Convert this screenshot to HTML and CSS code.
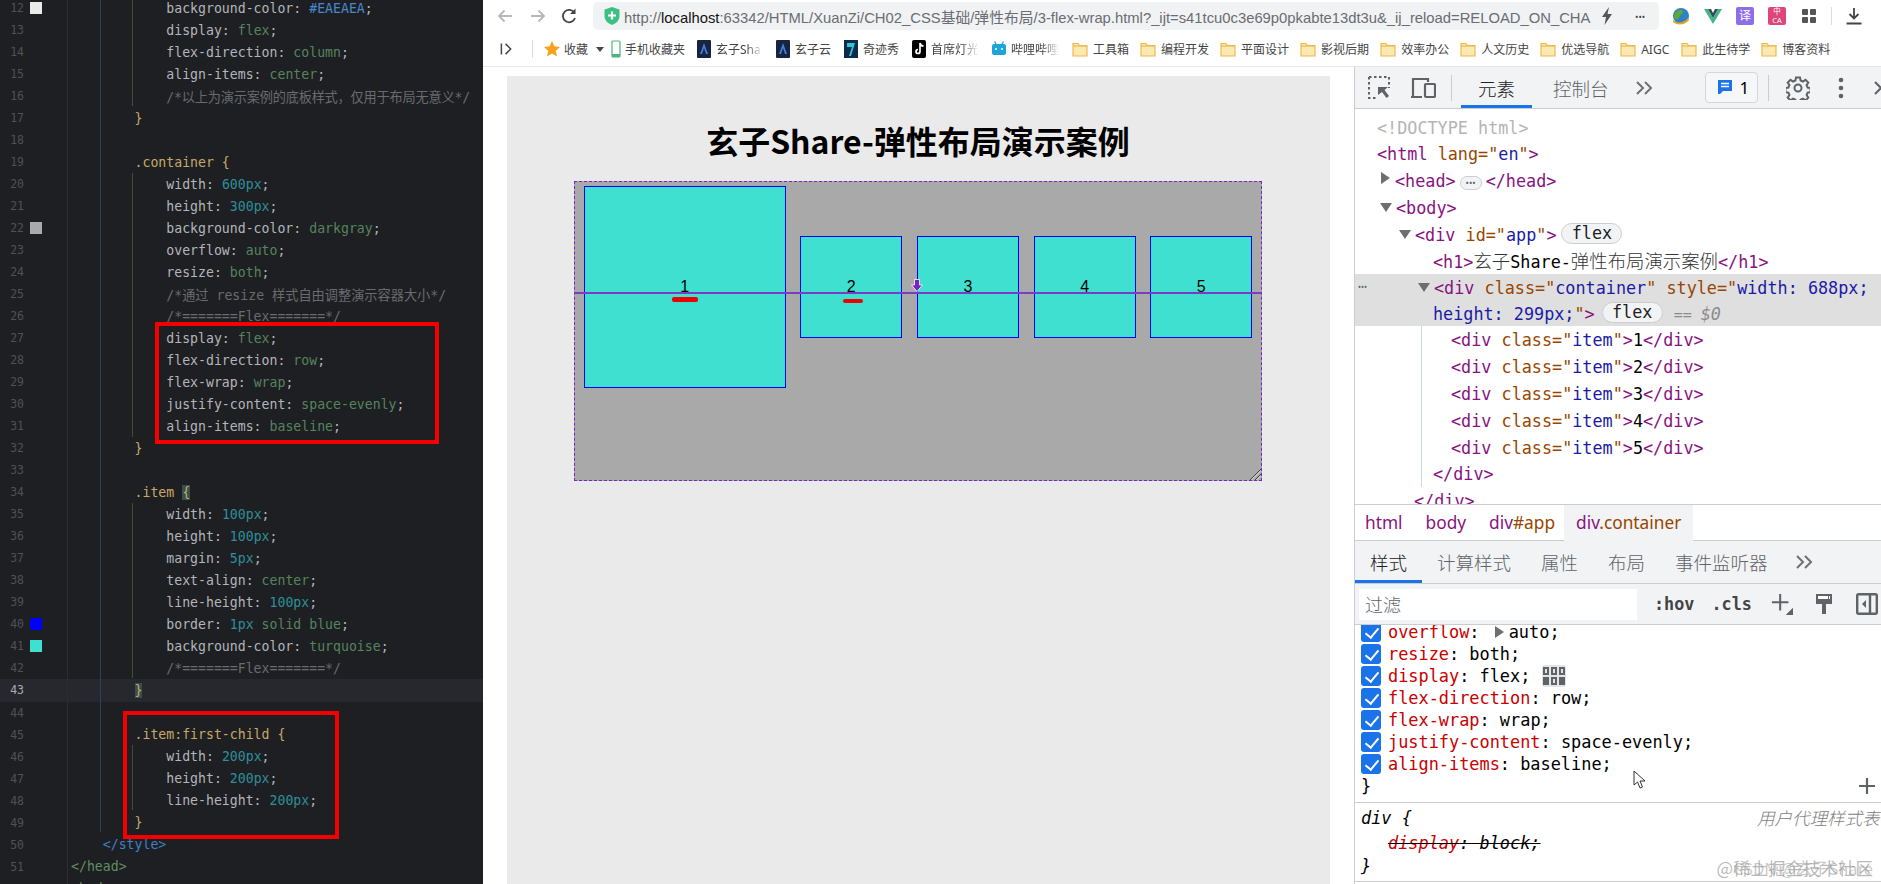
FILE: index.html
```html
<!DOCTYPE html>
<html lang="en">
<head>
    <meta charset="UTF-8">
    <title>3-flex-wrap</title>
    <link rel="stylesheet" href="styles.css">
</head>
<body>
    <svg class="defs" width="0" height="0">
        <symbol id="folder" viewBox="0 0 16 16">
            <path d="M1 2.5h5l1.5 2H15v10.5H1z" fill="#fde9b0" stroke="#efb84f" stroke-width="1.2"/>
            <path d="M1 5h14" stroke="#efb84f" stroke-width="1.2"/>
        </symbol>
        <symbol id="chevrons" viewBox="0 0 20 16">
            <path d="M2 2l6 6-6 6M10 2l6 6-6 6" fill="none" stroke="#6e7176" stroke-width="2"/>
        </symbol>
        <symbol id="xlogo" viewBox="0 0 14 18">
            <rect width="14" height="18" rx="1" fill="#17233f"/>
            <path d="M7 3L3 14h2l2-6 2 6h2z" fill="#3f7fe0"/>
        </symbol>
    </svg>

    <!-- left: code editor -->
    <section class="editor">
        <i class="guide guide-a"></i>
        <i class="guide guide-b"></i>
        <i class="guide guide-c g1"></i>
        <i class="guide guide-c g2"></i>
        <i class="guide guide-c g3"></i>
        <i class="guide guide-c g4"></i>
        <i class="redbox box-one"></i>
        <i class="redbox box-two"></i>

        <div class="lines">
            <div class="line"><span class="ln">12</span><span class="swatch sw-light"></span><code>            <b>background-color:</b> <span class="hex">#EAEAEA</span><b>;</b></code></div>
            <div class="line"><span class="ln">13</span><span class="swatch"></span><code>            <b>display:</b> <span class="val">flex</span><b>;</b></code></div>
            <div class="line"><span class="ln">14</span><span class="swatch"></span><code>            <b>flex-direction:</b> <span class="val">column</span><b>;</b></code></div>
            <div class="line"><span class="ln">15</span><span class="swatch"></span><code>            <b>align-items:</b> <span class="val">center</span><b>;</b></code></div>
            <div class="line"><span class="ln">16</span><span class="swatch"></span><code>            <span class="cm cm-tight">/*以上为演示案例的底板样式，仅用于布局无意义*/</span></code></div>
            <div class="line"><span class="ln">17</span><span class="swatch"></span><code>        <span class="sel">}</span></code></div>
            <div class="line"><span class="ln">18</span><span class="swatch"></span><code></code></div>
            <div class="line"><span class="ln">19</span><span class="swatch"></span><code>        <span class="sel">.container {</span></code></div>
            <div class="line"><span class="ln">20</span><span class="swatch"></span><code>            <b>width:</b> <span class="num">600px</span><b>;</b></code></div>
            <div class="line"><span class="ln">21</span><span class="swatch"></span><code>            <b>height:</b> <span class="num">300px</span><b>;</b></code></div>
            <div class="line"><span class="ln">22</span><span class="swatch sw-gray"></span><code>            <b>background-color:</b> <span class="val">darkgray</span><b>;</b></code></div>
            <div class="line"><span class="ln">23</span><span class="swatch"></span><code>            <b>overflow:</b> <span class="val">auto</span><b>;</b></code></div>
            <div class="line"><span class="ln">24</span><span class="swatch"></span><code>            <b>resize:</b> <span class="val">both</span><b>;</b></code></div>
            <div class="line"><span class="ln">25</span><span class="swatch"></span><code>            <span class="cm">/*通过 resize 样式自由调整演示容器大小*/</span></code></div>
            <div class="line"><span class="ln">26</span><span class="swatch"></span><code>            <span class="cm">/*=======Flex=======*/</span></code></div>
            <div class="line"><span class="ln">27</span><span class="swatch"></span><code>            <b>display:</b> <span class="val">flex</span><b>;</b></code></div>
            <div class="line"><span class="ln">28</span><span class="swatch"></span><code>            <b>flex-direction:</b> <span class="val">row</span><b>;</b></code></div>
            <div class="line"><span class="ln">29</span><span class="swatch"></span><code>            <b>flex-wrap:</b> <span class="val">wrap</span><b>;</b></code></div>
            <div class="line"><span class="ln">30</span><span class="swatch"></span><code>            <b>justify-content:</b> <span class="val">space-evenly</span><b>;</b></code></div>
            <div class="line"><span class="ln">31</span><span class="swatch"></span><code>            <b>align-items:</b> <span class="val">baseline</span><b>;</b></code></div>
            <div class="line"><span class="ln">32</span><span class="swatch"></span><code>        <span class="sel">}</span></code></div>
            <div class="line"><span class="ln">33</span><span class="swatch"></span><code></code></div>
            <div class="line"><span class="ln">34</span><span class="swatch"></span><code>        <span class="sel">.item <span class="match">{</span></span></code></div>
            <div class="line"><span class="ln">35</span><span class="swatch"></span><code>            <b>width:</b> <span class="num">100px</span><b>;</b></code></div>
            <div class="line"><span class="ln">36</span><span class="swatch"></span><code>            <b>height:</b> <span class="num">100px</span><b>;</b></code></div>
            <div class="line"><span class="ln">37</span><span class="swatch"></span><code>            <b>margin:</b> <span class="num">5px</span><b>;</b></code></div>
            <div class="line"><span class="ln">38</span><span class="swatch"></span><code>            <b>text-align:</b> <span class="val">center</span><b>;</b></code></div>
            <div class="line"><span class="ln">39</span><span class="swatch"></span><code>            <b>line-height:</b> <span class="num">100px</span><b>;</b></code></div>
            <div class="line"><span class="ln">40</span><span class="swatch sw-blue"></span><code>            <b>border:</b> <span class="num">1px</span> <span class="val">solid blue</span><b>;</b></code></div>
            <div class="line"><span class="ln">41</span><span class="swatch sw-turq"></span><code>            <b>background-color:</b> <span class="val">turquoise</span><b>;</b></code></div>
            <div class="line"><span class="ln">42</span><span class="swatch"></span><code>            <span class="cm">/*=======Flex=======*/</span></code></div>
            <div class="line current"><span class="ln">43</span><span class="swatch"></span><code>        <span class="sel"><span class="match">}</span></span></code></div>
            <div class="line"><span class="ln">44</span><span class="swatch"></span><code></code></div>
            <div class="line"><span class="ln">45</span><span class="swatch"></span><code>        <span class="sel">.item:first-child {</span></code></div>
            <div class="line"><span class="ln">46</span><span class="swatch"></span><code>            <b>width:</b> <span class="num">200px</span><b>;</b></code></div>
            <div class="line"><span class="ln">47</span><span class="swatch"></span><code>            <b>height:</b> <span class="num">200px</span><b>;</b></code></div>
            <div class="line"><span class="ln">48</span><span class="swatch"></span><code>            <b>line-height:</b> <span class="num">200px</span><b>;</b></code></div>
            <div class="line"><span class="ln">49</span><span class="swatch"></span><code>        <span class="sel">}</span></code></div>
            <div class="line"><span class="ln">50</span><span class="swatch"></span><code>    <span class="tag-blue">&lt;/style&gt;</span></code></div>
            <div class="line"><span class="ln">51</span><span class="swatch"></span><code><span class="tag-green">&lt;/head&gt;</span></code></div>
            <div class="line"><span class="ln">52</span><span class="swatch"></span><code><span class="tag-green">&lt;body&gt;</span></code></div>
        </div>
    </section>

    <!-- right: browser window -->
    <section class="browser">
        <div class="toolbar">
            <svg class="nav" viewBox="0 0 18 18"><path d="M16 9H3M8.500 3.500L3 9l5.500 5.500" fill="none" stroke="#b4b7bb" stroke-width="1.800"/></svg>
            <svg class="nav" viewBox="0 0 18 18"><path d="M2 9h13M9.500 3.500L15 9l-5.500 5.500" fill="none" stroke="#b4b7bb" stroke-width="1.800"/></svg>
            <svg class="nav reload" viewBox="0 0 18 18"><path d="M14.500 6A6.200 6.200 0 1 0 15 11" fill="none" stroke="#444" stroke-width="1.800"/><path d="M15.500 1.500V7H10z" fill="#444"/></svg>
            <div class="urlbar">
                <svg class="shield" viewBox="0 0 16 18"><path d="M8 0l7.500 2.500V9c0 4.500-3.500 7.500-7.500 9-4-1.500-7.500-4.500-7.500-9V2.500z" fill="#3cc183"/><path d="M8 4.500v8M4 8.500h8" stroke="#fff" stroke-width="2.200"/></svg>
                <span class="url">http://<em>localhost</em>:63342/HTML/XuanZi/CH02_CSS基础/弹性布局/3-flex-wrap.html?_ijt=s41tcu0c3e69p0pkabte13dt3u&amp;_ij_reload=RELOAD_ON_CHA</span>
                <svg class="bolt" viewBox="0 0 12 18"><path d="M8 0L1 10h4l-1.500 8L11 7H6.500z" fill="#555"/></svg>
                <span class="dots">•••</span>
            </div>
            <div class="exts">
                <svg class="ext" viewBox="0 0 18 18"><circle cx="9" cy="9" r="8" fill="#2f7fc9"/><path d="M3 6c3-4 7-4 8-2s-2 3-3 5-3 5-5 3-1-4 0-6z" fill="#5ea83c"/><path d="M1 13c4 4 11 3 15-2l1 2c-4 5-12 6-16 2z" fill="#e5a41f"/></svg>
                <svg class="ext" viewBox="0 0 18 18"><path d="M0 2h4l5 9 5-9h4L9 17z" fill="#41b883"/><path d="M4 2h3l2 4 2-4h3L9 11z" fill="#35495e"/></svg>
                <span class="ext tile tile-purple">译</span>
                <span class="ext tile tile-red">中<br>CA</span>
                <svg class="ext" viewBox="0 0 18 18"><rect x="2" y="2" width="6" height="6" rx="1" fill="#555"/><rect x="10" y="2" width="6" height="6" rx="1" fill="#555"/><rect x="2" y="10" width="6" height="6" rx="1" fill="#555"/><rect x="10" y="10" width="6" height="6" rx="1" fill="#555"/></svg>
                <i class="ext-sep"></i>
                <svg class="ext ext-down" viewBox="0 0 18 18"><path d="M9 1v10M4.500 7L9 11.500 13.500 7M1.500 16.500h15" fill="none" stroke="#444" stroke-width="1.800"/></svg>
                <span class="ext-more">⋮</span>
            </div>
        </div>

        <div class="bookmarks">
            <svg class="bm-toggle" viewBox="0 0 14 14"><path d="M1.500 1v12M6 1.500L11.500 7 6 12.500" fill="none" stroke="#444" stroke-width="1.600"/></svg>
            <i class="bm-sep"></i>
            <div class="mark mark-fav">
                <svg class="fav-star" viewBox="0 0 16 16"><path d="M8 0l2.400 5.300 5.600.6-4.200 3.800 1.200 5.800L8 12.600l-5 2.900 1.200-5.800L0 5.900l5.600-.6z" fill="#f7a21b"/></svg>
                <span>收藏</span><i class="caret"></i>
            </div>
            <div class="mark mark-phone">
                <svg class="fav-phone" viewBox="0 0 10 18"><rect x="1" y="1" width="8" height="16" rx="1" fill="none" stroke="#4fb37f" stroke-width="1.200"/><path d="M1 14h8v3H1z" fill="#4fb37f"/></svg>
                <span>手机收藏夹</span>
            </div>
            <div class="mark mark-site">
                <svg class="fav"><use href="#xlogo"/></svg>
                <span class="fade">玄子Sha</span>
            </div>
            <div class="mark mark-site">
                <svg class="fav"><use href="#xlogo"/></svg>
                <span>玄子云</span>
            </div>
            <div class="mark mark-site">
                <svg class="fav" viewBox="0 0 14 18"><rect width="14" height="18" fill="#0c2a4a"/><path d="M3 3h8L7 16H5l3-9H3z" fill="#2fc4d8"/></svg>
                <span>奇迹秀</span>
            </div>
            <div class="mark mark-site">
                <svg class="fav" viewBox="0 0 14 18"><rect width="14" height="18" rx="2" fill="#000"/><path d="M8 3v8.500a2 2 0 1 1-2-2M8 3c.3 2 1.500 3 3.500 3.200" fill="none" stroke="#fff" stroke-width="1.700"/></svg>
                <span class="fade fade-wide">首席灯光</span>
            </div>
            <div class="mark mark-site">
                <svg class="fav" viewBox="0 0 14 18"><rect y="4" width="14" height="11" rx="2" fill="#1ea5d8"/><path d="M4 4L2.500 1.500M10 4l1.500-2.500" stroke="#1ea5d8" stroke-width="1.400"/><path d="M4 8v2M10 8v2" stroke="#fff" stroke-width="1.500"/></svg>
                <span class="fade fade-wide">哔哩哔哩</span>
            </div>
            <div class="mark"><svg class="folder"><use href="#folder"/></svg><span>工具箱</span></div>
            <div class="mark"><svg class="folder"><use href="#folder"/></svg><span>编程开发</span></div>
            <div class="mark"><svg class="folder"><use href="#folder"/></svg><span>平面设计</span></div>
            <div class="mark"><svg class="folder"><use href="#folder"/></svg><span>影视后期</span></div>
            <div class="mark"><svg class="folder"><use href="#folder"/></svg><span>效率办公</span></div>
            <div class="mark"><svg class="folder"><use href="#folder"/></svg><span>人文历史</span></div>
            <div class="mark"><svg class="folder"><use href="#folder"/></svg><span>优选导航</span></div>
            <div class="mark"><svg class="folder"><use href="#folder"/></svg><span class="latin">AIGC</span></div>
            <div class="mark"><svg class="folder"><use href="#folder"/></svg><span>此生待学</span></div>
            <div class="mark"><svg class="folder"><use href="#folder"/></svg><span>博客资料</span></div>
        </div>

        <div class="split">
            <div class="page">
                <div id="app">
                    <h1>玄子Share-弹性布局演示案例</h1>
                    <div class="container">
                        <div class="item">1</div>
                        <div class="item">2</div>
                        <div class="item">3</div>
                        <div class="item">4</div>
                        <div class="item">5</div>
                        <i class="baseline"></i>
                        <i class="redmark mark-one"></i>
                        <i class="redmark mark-two"></i>
                        <svg class="flow-arrow" viewBox="0 0 12 13"><path d="M3.500 .5h5v5.500h3L6 12.500 .5 6h3z" fill="#7a22c8" stroke="#fff" stroke-width=".8"/></svg>
                        <svg class="grip" viewBox="0 0 12 12"><path d="M1 12L12 1M6 12l6-6" stroke="#444" stroke-width="1"/><path d="M2.500 12L12 2.500M7.500 12L12 7.500" stroke="#ddd" stroke-width="1"/></svg>
                    </div>
                </div>
            </div>

            <div class="devtools">
                <div class="dt-tabs">
                    <svg class="dt-inspect" viewBox="0 0 22 24"><path d="M1 1h20v11M1 1v21h8" fill="none" stroke="#5f6368" stroke-width="2" stroke-dasharray="2.500 2.500"/><path d="M10 11h10l-3.500 3 4.500 6-2.500 2-4.500-6-4 3z" fill="#5f6368"/></svg>
                    <svg class="dt-device" viewBox="0 0 26 22"><path d="M3 20V2h15v3M1 20h11" fill="none" stroke="#5f6368" stroke-width="2.200"/><rect x="15" y="7" width="10" height="13" rx="1" fill="none" stroke="#5f6368" stroke-width="2.200"/></svg>
                    <i class="dt-sep"></i>
                    <span class="dt-tab active">元素</span>
                    <span class="dt-tab console-tab">控制台</span>
                    <svg class="chev"><use href="#chevrons"/></svg>
                    <span class="issues"><svg viewBox="0 0 14 15"><path d="M0 0h14v11H5l-3 3H0z" fill="#1a73e8"/><path d="M3 3.500h8M3 6.500h8" stroke="#fff" stroke-width="1.300"/></svg>1</span>
                    <i class="dt-sep sep-gear"></i>
                    <svg class="dt-gear" viewBox="0 0 24 24"><path d="M10 1.500h4l.6 3 2.300 1 2.600-1.700 2.800 2.800-1.700 2.600 1 2.300 3 .6v4l-3 .6-1 2.300 1.700 2.600-2.800 2.800-2.600-1.700-2.300 1-.6 3h-4l-.6-3-2.300-1-2.600 1.700-2.800-2.800 1.700-2.600-1-2.300-3-.6v-4l3-.6 1-2.300-1.700-2.600 2.800-2.800 2.600 1.700 2.300-1z" fill="none" stroke="#5f6368" stroke-width="2"/><circle cx="12" cy="12" r="3.500" fill="none" stroke="#5f6368" stroke-width="2"/></svg>
                    <svg class="dt-kebab" viewBox="0 0 6 22"><circle cx="3" cy="3" r="2.300" fill="#5f6368"/><circle cx="3" cy="11" r="2.300" fill="#5f6368"/><circle cx="3" cy="19" r="2.300" fill="#5f6368"/></svg>
                    <svg class="dt-close" viewBox="0 0 14 14"><path d="M1 1l12 12M13 1L1 13" stroke="#5f6368" stroke-width="2"/></svg>
                </div>

                <div class="dom">
                    <div class="row d0 doctype">&lt;!DOCTYPE html&gt;</div>
                    <div class="row d0"><span class="tg">&lt;html</span> <span class="an">lang</span><span class="an">=</span><span class="av"><span class="an">"</span>en<span class="an">"</span></span><span class="tg">&gt;</span></div>
                    <div class="row d1"><i class="tri tri-right"></i><span class="tg">&lt;head&gt;</span><span class="more">•••</span><span class="tg">&lt;/head&gt;</span></div>
                    <div class="row d1"><i class="tri tri-down"></i><span class="tg">&lt;body&gt;</span></div>
                    <div class="row d2"><i class="tri tri-down"></i><span class="tg">&lt;div</span> <span class="an">id=</span><span class="av"><span class="an">"</span>app<span class="an">"</span></span><span class="tg">&gt;</span><span class="pill">flex</span></div>
                    <div class="row d3"><span class="tg">&lt;h1&gt;</span><span class="cjk">玄子</span>Share-<span class="cjk">弹性布局演示案例</span><span class="tg">&lt;/h1&gt;</span></div>
                    <div class="row d3 selected">
                        <span class="sel-dots">•••</span>
                        <i class="tri tri-down"></i><span class="tg">&lt;div</span> <span class="an">class=</span><span class="av"><span class="an">"</span>container<span class="an">"</span></span> <span class="an">style=</span><span class="av"><span class="an">"</span>width: 688px;<br>height: 299px;<span class="an">"</span></span><span class="tg">&gt;</span><span class="pill">flex</span><span class="eq">== <em>$0</em></span>
                    </div>
                    <div class="children">
                        <div class="row d4"><span class="tg">&lt;div</span> <span class="an">class=</span><span class="av"><span class="an">"</span>item<span class="an">"</span></span><span class="tg">&gt;</span>1<span class="tg">&lt;/div&gt;</span></div>
                        <div class="row d4"><span class="tg">&lt;div</span> <span class="an">class=</span><span class="av"><span class="an">"</span>item<span class="an">"</span></span><span class="tg">&gt;</span>2<span class="tg">&lt;/div&gt;</span></div>
                        <div class="row d4"><span class="tg">&lt;div</span> <span class="an">class=</span><span class="av"><span class="an">"</span>item<span class="an">"</span></span><span class="tg">&gt;</span>3<span class="tg">&lt;/div&gt;</span></div>
                        <div class="row d4"><span class="tg">&lt;div</span> <span class="an">class=</span><span class="av"><span class="an">"</span>item<span class="an">"</span></span><span class="tg">&gt;</span>4<span class="tg">&lt;/div&gt;</span></div>
                        <div class="row d4"><span class="tg">&lt;div</span> <span class="an">class=</span><span class="av"><span class="an">"</span>item<span class="an">"</span></span><span class="tg">&gt;</span>5<span class="tg">&lt;/div&gt;</span></div>
                        <div class="row d3"><span class="tg">&lt;/div&gt;</span></div>
                    </div>
                    <div class="row d2"><span class="tg">&lt;/div&gt;</span></div>
                </div>

                <div class="crumbs">
                    <span class="crumb"><b>html</b></span>
                    <span class="crumb"><b>body</b></span>
                    <span class="crumb"><b>div</b><u>#app</u></span>
                    <span class="crumb current-crumb"><b>div</b><u>.container</u></span>
                </div>

                <div class="dt-tabs sub-tabs">
                    <span class="sub-tab active">样式</span>
                    <span class="sub-tab">计算样式</span>
                    <span class="sub-tab">属性</span>
                    <span class="sub-tab">布局</span>
                    <span class="sub-tab">事件监听器</span>
                    <svg class="chev"><use href="#chevrons"/></svg>
                </div>

                <div class="filter">
                    <span class="filter-input">过滤</span>
                    <span class="filter-btn hov">:hov</span>
                    <span class="filter-btn">.cls</span>
                    <svg class="tool-plus" viewBox="0 0 24 24"><path d="M10 1v18M1 10h18" stroke="#5f6368" stroke-width="2.200"/><path d="M24 16v8h-8z" fill="#5f6368"/></svg>
                    <svg class="tool-paint" viewBox="0 0 20 22"><path d="M2 1h16v10H2zM8 11h4v10H8z" fill="#5f6368"/><path d="M4 3h10v3H4zM15 3h1v3h-1z" fill="#fff"/></svg>
                    <svg class="tool-side" viewBox="0 0 22 22"><rect x="1.200" y="1.200" width="19.600" height="19.600" rx="1.500" fill="none" stroke="#5f6368" stroke-width="2.400"/><path d="M14 1v20" stroke="#5f6368" stroke-width="2.400"/><path d="M10 7v8l-4-4z" fill="#5f6368"/></svg>
                </div>

                <div class="rules">
                    <div class="decls">
                        <div class="decl"><i class="check"></i><span class="pn">overflow</span>: <i class="tri tri-value"></i>auto;</div>
                        <div class="decl"><i class="check"></i><span class="pn">resize</span>: both;</div>
                        <div class="decl"><i class="check"></i><span class="pn">display</span>: flex; <svg class="flex-ico" viewBox="0 0 24 22"><rect width="24" height="22" rx="2" fill="#e3e4e6"/><path d="M1 2h6v8H1zM9 2h6v8H9zM17 2h6v8h-6zM1 12h6v8H1zM9 12h6v8H9zM17 12h6v8h-6z" fill="#5f6368"/><path d="M3 4h2v4H3zM11 4h2v4h-2zM19 4h2v4h-2zM11 14h2v4h-2z" fill="#e3e4e6"/></svg></div>
                        <div class="decl"><i class="check"></i><span class="pn">flex-direction</span>: row;</div>
                        <div class="decl"><i class="check"></i><span class="pn">flex-wrap</span>: wrap;</div>
                        <div class="decl"><i class="check"></i><span class="pn">justify-content</span>: space-evenly;</div>
                        <div class="decl"><i class="check"></i><span class="pn">align-items</span>: baseline;</div>
                    </div>
                    <div class="rule-end">}<svg class="rule-plus" viewBox="0 0 16 16"><path d="M8 0v16M0 8h16" stroke="#5f6368" stroke-width="2.200"/></svg></div>
                    <div class="ua-rule">
                        <div class="ua-head"><span>div {</span><span class="ua-src">用户代理样式表</span></div>
                        <div class="ua-decl"><s><span class="pn">display</span>: block;</s></div>
                        <div class="ua-end">}</div>
                    </div>
                    <span class="wm">@稀土掘金技术社区</span>
                    <span class="wm wm-under">CSDN @玄子Share</span>
                    <svg class="cursor" viewBox="0 0 13 19"><path d="M1 1v14l3.500-3 2.500 6 2.500-1-2.500-6H12z" fill="#fff" stroke="#333" stroke-width="1"/></svg>
                </div>
            </div>
        </div>
    </section>
</body>
</html>
```

FILE: styles.css
```css
* {
    box-sizing: border-box;
}
html, body {
    margin: 0;
    height: 100%;
    overflow: hidden;
}
body {
    display: flex;
    background: #fff;
    color: #000;
    font-family: "Noto Sans", "Noto Sans CJK SC", sans-serif;
}
.defs {
    position: absolute;
}
svg {
    display: block;
    flex: none;
}

/* editor */
.editor {
    position: relative;
    flex: none;
    width: 483px;
    height: 884px;
    overflow: hidden;
    background: #1e1f22;
}
.lines {
    margin-top: -3px;
}
.line {
    display: flex;
    align-items: center;
    height: 22.02px;
}
.line.current {
    background: #26282e;
}
.line.current .ln {
    color: #a9abb3;
}
.ln {
    width: 24px;
    text-align: right;
    color: #4e5157;
    font: 11.500px "DejaVu Sans Mono", monospace;
}
.swatch {
    width: 12px;
    height: 12px;
    margin: 0 29px 0 6px;
}
.sw-light { background: #eaeaea; }
.sw-gray { background: #a9a9a9; }
.sw-blue { background: #0000ff; }
.sw-turq { background: #40e0d0; }
code {
    white-space: pre;
    color: #b3b5bb;
    font: 13.200px "DejaVu Sans Mono", "Noto Sans CJK SC", monospace;
}
code b {
    font-weight: normal;
}
.hex { color: #4a86d0; }
.val { color: #55845f; }
.num { color: #2f8f9c; }
.cm { color: #686b70; }
.cm-tight { letter-spacing: -0.2px; }
.sel { color: #c8a868; }
.match { background: #3a4f4b; }
.tag-blue { color: #3f7fc4; }
.tag-green { color: #5f8f62; }
.guide {
    position: absolute;
    width: 1px;
}
.guide-a {
    left: 67px;
    top: 0;
    bottom: 0;
    background: #2b2d31;
}
.guide-b {
    left: 100px;
    top: 0;
    height: 832px;
    background: #2a4358;
}
.guide-c {
    left: 132px;
    background: #4c4632;
}
.g1 { top: 0; height: 106px; }
.g2 { top: 173px; height: 264px; }
.g3 { top: 503px; height: 175px; }
.g4 { top: 745px; height: 65px; }
.redbox {
    position: absolute;
    border: 4px solid #f30000;
}
.box-one {
    left: 155px;
    top: 322px;
    width: 284px;
    height: 122px;
}
.box-two {
    left: 123px;
    top: 711px;
    width: 216px;
    height: 128px;
}

/* browser chrome */
.browser {
    flex: 1;
    min-width: 0;
    display: flex;
    flex-direction: column;
    height: 884px;
}
.toolbar {
    display: flex;
    align-items: center;
    flex: none;
    height: 32px;
    padding-left: 13px;
}
.nav {
    width: 18px;
    height: 18px;
    margin-right: 15px;
}
.nav.reload {
    margin: 0 15px 0 -2px;
}
.urlbar {
    display: flex;
    align-items: center;
    flex: none;
    width: 1066px;
    height: 28px;
    padding-left: 11px;
    background: #f1f2f3;
    border-radius: 5px;
}
.shield {
    width: 16px;
    height: 18px;
}
.url {
    flex: none;
    width: 967px;
    margin-left: 4px;
    overflow: hidden;
    white-space: nowrap;
    color: #6a6d71;
    font-family: "Liberation Sans", "Noto Sans CJK SC", sans-serif;
    font-size: 14.800px;
}
.url em {
    font-style: normal;
    color: #111;
}
.bolt {
    width: 12px;
    height: 18px;
    margin-left: 10px;
}
.dots {
    margin-left: 22px;
    color: #444;
    font-size: 9px;
}
.exts {
    display: flex;
    align-items: center;
    flex: none;
    margin-left: 13px;
}
.ext {
    width: 18px;
    height: 18px;
    margin-right: 14px;
}
.ext-down {
    margin-right: 11px;
}
.tile {
    display: block;
    border-radius: 2px;
    color: #fff;
    text-align: center;
}
.tile-purple {
    background: #8e6ee8;
    font-size: 12px;
    line-height: 18px;
}
.tile-red {
    background: #df4579;
    font-size: 7.500px;
    line-height: 8.500px;
}
.ext-sep {
    width: 1px;
    height: 18px;
    margin: 0 13px 0 -1px;
    background: #dcdde0;
}
.ext-more {
    color: #444;
    font-size: 18px;
}
.bookmarks {
    display: flex;
    align-items: center;
    flex: none;
    height: 35px;
    padding-left: 17px;
    color: #444;
    font-size: 12px;
    border-bottom: 1px solid #e4e5e7;
    white-space: nowrap;
}
.bm-toggle {
    width: 13px;
    height: 14px;
}
.bm-sep {
    width: 1px;
    height: 18px;
    margin: 0 11px 0 19px;
    background: #dcdde0;
}
.mark {
    display: flex;
    align-items: center;
    flex: none;
    gap: 5px;
    margin-right: 11px;
}
.mark-fav {
    gap: 4px;
    margin-right: 7px;
}
.mark-phone {
    gap: 4px;
    margin-right: 12px;
}
.mark-site {
    margin-right: 13px;
}
.fav-star {
    width: 16px;
    height: 16px;
}
.caret {
    width: 0;
    height: 0;
    margin-left: 4px;
    border: 4px solid transparent;
    border-top: 5px solid #444;
    border-bottom: 0;
}
.fav-phone {
    width: 10px;
    height: 18px;
}
.fav {
    width: 14px;
    height: 18px;
}
.folder {
    width: 16px;
    height: 16px;
}
.fade {
    width: 47px;
    overflow: hidden;
    -webkit-mask-image: linear-gradient(to right, #000 65%, transparent);
    mask-image: linear-gradient(to right, #000 65%, transparent);
}
.fade-wide {
    width: 48px;
}
.latin {
    width: 29px;
}

/* page under the toolbar */
.split {
    flex: 1;
    min-height: 0;
    display: flex;
}
.page {
    flex: none;
    width: 871px;
    padding: 9px 24px 0;
}
#app {
    height: 100%;
    padding-right: 1px;
    display: flex;
    flex-direction: column;
    align-items: center;
    background: #eaeaea;
}
h1 {
    margin: 41px 0 18px;
    font-family: "Noto Sans CJK SC", sans-serif;
    font-size: 32px;
    font-weight: bold;
    line-height: 46px;
}
.container {
    position: relative;
    flex: none;
    display: flex;
    flex-direction: row;
    flex-wrap: wrap;
    justify-content: space-evenly;
    align-items: baseline;
    align-content: flex-start;
    width: 688px;
    height: 300px;
    overflow: hidden;
    background: #a9a9a9;
    outline: 1px dashed #7a22c8;
    outline-offset: -1px;
    font-family: "Liberation Sans", sans-serif;
    font-size: 16px;
}
.item {
    width: 100px;
    height: 100px;
    margin: 5px;
    box-sizing: content-box;
    text-align: center;
    line-height: 100px;
    border: 1px solid blue;
    background: #40e0d0;
}
.item:first-child {
    width: 200px;
    height: 200px;
    line-height: 200px;
}
.baseline {
    position: absolute;
    left: 0;
    right: 0;
    top: 111px;
    height: 2px;
    background: #7a3cc8;
}
.redmark {
    position: absolute;
    background: #ee0000;
}
.mark-one {
    left: 98px;
    top: 116px;
    width: 26px;
    height: 5px;
    border-radius: 2px;
}
.mark-two {
    left: 269px;
    top: 118px;
    width: 20px;
    height: 4px;
    border-radius: 2px;
}
.flow-arrow {
    position: absolute;
    left: 337px;
    top: 98px;
    width: 12px;
    height: 13px;
}
.grip {
    position: absolute;
    right: 1px;
    bottom: 1px;
    width: 12px;
    height: 12px;
}

/* devtools */
.devtools {
    flex: 1;
    min-width: 0;
    display: flex;
    flex-direction: column;
    border-left: 1px solid #cbcdd1;
    overflow: hidden;
}
.dt-tabs {
    display: flex;
    align-items: center;
    flex: none;
    height: 42px;
    background: #f1f3f4;
    border-bottom: 1px solid #cbcdd1;
    white-space: nowrap;
}
.dt-inspect {
    width: 22px;
    height: 24px;
    margin-left: 13px;
}
.dt-device {
    width: 26px;
    height: 22px;
    margin-left: 20px;
}
.dt-sep {
    flex: none;
    width: 1px;
    height: 26px;
    margin: 0 9px 0 15px;
    background: #cbcdd1;
}
.dt-tab {
    display: flex;
    align-items: center;
    flex: none;
    height: 41px;
    padding: 0 17px;
    color: #5f6368;
    font-size: 18.500px;
    font-family: "Noto Sans CJK SC", sans-serif;
    font-weight: 300;
}
.dt-tab.active {
    color: #202124;
    border-bottom: 3px solid #1a73e8;
    padding-top: 3px;
}
.console-tab {
    margin-left: 4px;
}
.dt-tabs .chev {
    width: 20px;
    height: 16px;
}
.dt-tab + .chev {
    margin-left: 9px;
}
.issues {
    display: flex;
    align-items: center;
    flex: none;
    gap: 8px;
    width: 53px;
    height: 31px;
    margin-left: 50px;
    padding-left: 12px;
    background: #f6f7f8;
    border: 1px solid #d5d7da;
    border-radius: 4px;
    font-size: 17px;
}
.issues svg {
    width: 14px;
    height: 15px;
}
.sep-gear {
    margin: 0 17px 0 10px;
}
.dt-gear {
    width: 24px;
    height: 24px;
}
.dt-kebab {
    width: 6px;
    height: 22px;
    margin-left: 28px;
}
.dt-close {
    width: 14px;
    height: 14px;
    margin-left: 30px;
}
.dom {
    position: relative;
    flex: none;
    height: 396px;
    padding-top: 4.600px;
    overflow: hidden;
    border-bottom: 1px solid #cbcdd1;
    font: 16.800px/28.700px "DejaVu Sans Mono", "Noto Sans CJK SC", monospace;
    white-space: nowrap;
}
.row {
    position: relative;
    height: 26.800px;
}
.d0 { padding-left: 22px; }
.d1 { padding-left: 40px; }
.d2 { padding-left: 59px; }
.d3 { padding-left: 78px; }
.d4 { padding-left: 96px; }
.doctype { color: #b4b4b4; }
.tg { color: #881280; }
.an { color: #994500; }
.av { color: #1a1aa6; }
.cjk {
    color: #333;
    font-family: "Noto Sans CJK SC", sans-serif;
    font-size: 18.400px;
    font-weight: 300;
    line-height: 1;
}
.tri {
    display: inline-block;
    width: 0;
    height: 0;
    border-style: solid;
    border-color: transparent;
}
.tri-right {
    margin: 0 5px 3px -14px;
    border-width: 6px 0 6px 9px;
    border-left-color: #6e6e6e;
}
.tri-down {
    margin: 0 4px 2px -15px;
    border-width: 9px 6px 0;
    border-top-color: #6e6e6e;
}
.more {
    display: inline-block;
    width: 22px;
    height: 14px;
    margin: 0 4px;
    background: #f1f3f4;
    border: 1px solid #cbcdd1;
    border-radius: 7px;
    color: #5f6368;
    font: 9px/11px "Noto Sans", sans-serif;
    text-align: center;
    vertical-align: 1px;
}
.pill {
    display: inline-block;
    width: 61px;
    height: 21px;
    margin-left: 5px;
    background: #f1f3f4;
    border: 1px solid #cbcdd1;
    border-radius: 11px;
    color: #202124;
    line-height: 19px;
    text-align: center;
    vertical-align: 2px;
}
.selected {
    height: 52px;
    padding-top: 1px;
    background: #dfdfdf;
    line-height: 26px;
}
.sel-dots {
    position: absolute;
    left: 3px;
    top: 0;
    color: #5f6368;
    font: 8px/26px "Noto Sans", sans-serif;
}
.selected .pill {
    margin-left: 7px;
}
.eq {
    margin-left: 11px;
    color: #8b8b8b;
    font-size: 15px;
}
.eq em {
    font-size: 16.800px;
}
.children {
    margin-left: 66px;
    border-left: 1px solid #c9d6ea;
    height: 161px;
}
.children .d4 { padding-left: 29px; }
.children .d3 { padding-left: 11px; }
.crumbs {
    display: flex;
    align-items: center;
    flex: none;
    height: 36px;
    padding-left: 10px;
    border-bottom: 1px solid #cbcdd1;
    font-size: 17.300px;
    color: #881280;
}
.crumb {
    margin-right: 23px;
    line-height: 36px;
}
.crumb b { font-weight: normal; }
.crumb u {
    text-decoration: none;
    color: #994500;
}
.current-crumb {
    margin-left: -14px;
    padding: 0 12px;
    background: #f1f3f4;
}
.sub-tabs {
    height: 43px;
}
.sub-tab {
    display: flex;
    align-items: center;
    flex: none;
    height: 42px;
    padding: 0 15px;
    color: #5f6368;
    font-family: "Noto Sans CJK SC", sans-serif;
    font-size: 18.500px;
    font-weight: 300;
}
.sub-tab.active {
    width: 67px;
    padding-top: 3px;
    color: #202124;
    border-bottom: 3px solid #1a73e8;
}
.sub-tab + .chev {
    margin-left: 12px;
}
.filter {
    display: flex;
    align-items: center;
    flex: none;
    height: 41px;
    padding-left: 4px;
    background: #f1f3f4;
    border-bottom: 1px solid #cbcdd1;
}
.filter-input {
    flex: none;
    width: 278px;
    height: 31px;
    padding-left: 6px;
    background: #fff;
    color: #5f6368;
    font: 300 18px/31px "Noto Sans CJK SC", sans-serif;
}
.filter-btn {
    color: #444;
    font: bold 16.800px "DejaVu Sans Mono", monospace;
}
.hov { margin: 0 17px 0 17px; }
.tool-plus {
    width: 22px;
    height: 22px;
    margin-left: 19px;
}
.tool-paint {
    width: 20px;
    height: 22px;
    margin-left: 21px;
}
.tool-side {
    width: 22px;
    height: 22px;
    margin-left: 22px;
}
.rules {
    position: relative;
    flex: 1;
    min-height: 0;
    overflow: hidden;
    font: 16.900px/22px "DejaVu Sans Mono", "Noto Sans CJK SC", monospace;
    white-space: nowrap;
}
.decls {
    margin-top: -4px;
}
.decl {
    display: flex;
    align-items: center;
    white-space: pre;
    height: 22px;
}
.check {
    position: relative;
    width: 20px;
    height: 20px;
    margin: 0 7px 0 6px;
    background: #1a73e8;
    border-radius: 3px;
}
.check::after {
    content: "";
    position: absolute;
    left: 7px;
    top: 3px;
    width: 6px;
    height: 11px;
    border: solid #fff;
    border-width: 0 2.500px 2.500px 0;
    transform: rotate(40deg);
}
.pn { color: #c80000; }
.tri-value {
    margin: 0 5px 0 5px;
    border-width: 6px 0 6px 9px;
    border-left-color: #6e6e6e;
}
.flex-ico {
    width: 24px;
    height: 22px;
    margin-left: 1px;
}
.rule-end {
    display: flex;
    justify-content: space-between;
    align-items: center;
    height: 27px;
    padding: 0 6px 5px;
}
.rule-plus {
    width: 16px;
    height: 16px;
}
.ua-rule {
    height: 80px;
    padding: 4px 0 0 6px;
    border-top: 1px solid #cbcdd1;
    border-bottom: 1px solid #cbcdd1;
    font-style: italic;
}
.ua-head {
    display: flex;
    justify-content: space-between;
    overflow: hidden;
}
.ua-src {
    flex: none;
    width: 124px;
    overflow: hidden;
    color: #808080;
    font: italic 300 17.500px/22px "Noto Sans CJK SC", sans-serif;
}
.ua-decl {
    height: 22px;
    margin: 3px 0 1px 27px;
}
.wm {
    position: absolute;
    right: 8px;
    top: 232px;
    color: rgba(140, 140, 140, 0.6);
    font: 17.500px/22px "Noto Sans CJK SC", sans-serif;
}
.wm-under {
    color: rgba(150, 150, 150, 0.5);
    font-size: 16.500px;
}
.cursor {
    position: absolute;
    left: 278px;
    top: 145px;
    width: 13px;
    height: 19px;
}
```
